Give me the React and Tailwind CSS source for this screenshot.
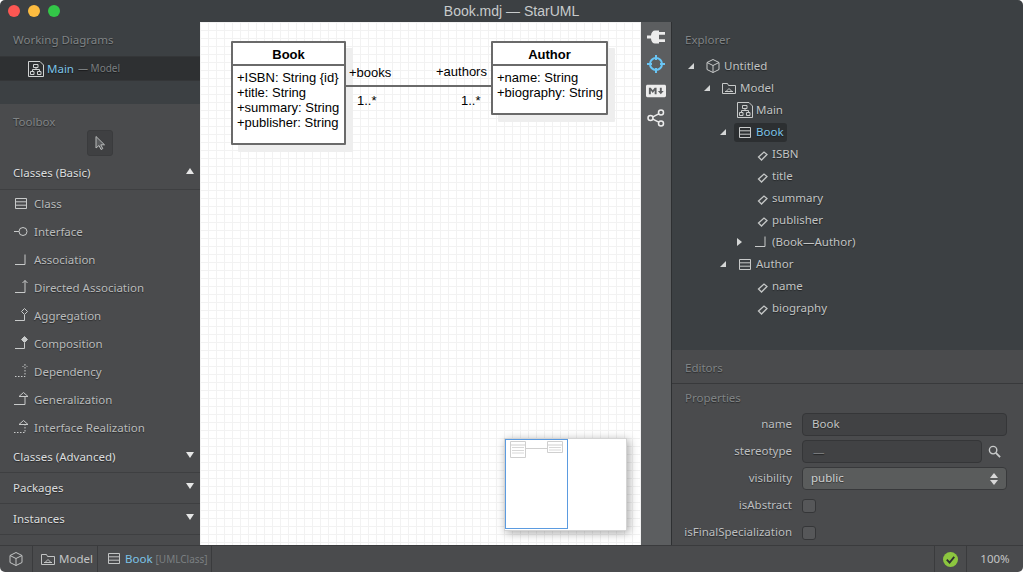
import React from 'react';
import { FaMarkdown } from 'react-icons/fa';

// small drawn icons, all in a 16x16 box
const Svg = ({ children, className = "" }) => (
  <svg viewBox="0 0 16 16" fill="none" stroke="currentColor" strokeWidth="1" className={`w-4 h-4 shrink-0 ${className}`}>
    {children}
  </svg>
);

const ClassIcon = () => (
  <Svg><path d="M2.5 2.5h11v10h-11zM2.5 5.8h11M2.5 9.2h11" /></Svg>
);
const InterfaceIcon = () => (
  <Svg><circle cx="10" cy="7.5" r="4" /><path d="M1 7.5h5" /></Svg>
);
const AssocIcon = () => (
  <Svg><path d="M2 12.5h10V2.5" /></Svg>
);
const DirectedIcon = () => (
  <Svg><path d="M2 12.5h10V.5M9.5 3L12 .5 14.5 3" /></Svg>
);
const AggregationIcon = ({ filled }) => (
  <Svg>
    <path d="M2 12.5h9.5V7" />
    <path d="M11.5.5l3 3-3 3-3-3z" fill={filled ? "currentColor" : "none"} />
  </Svg>
);
const DependencyIcon = () => (
  <Svg><path d="M2 12.5h10V.5M9.5 3L12 .5 14.5 3" strokeDasharray="1.5 1.5" /></Svg>
);
const GeneralizationIcon = () => (
  <Svg><path d="M1 12.5h11v-8M6 4.5h9L10.5.5z" /></Svg>
);
const RealizationIcon = () => (
  <Svg>
    <path d="M1 12.5h11v-8" strokeDasharray="1.5 1.5" />
    <path d="M6 4.5h9L10.5.5z" />
  </Svg>
);
const CubeIcon = () => (
  <Svg><path d="M8 1.5l6 3v7l-6 3-6-3v-7zM2 4.5l6 3 6-3M8 7.5v7" /></Svg>
);
const PackageIcon = () => (
  <Svg><path d="M1.5 3.5v10h13v-8h-7l-1-2zM5 11.5h6L8 8.5zM4 11.5h8" /></Svg>
);
const DiagramIcon = () => (
  <Svg>
    <path d="M.5.5h11.5l3.5 3.5v11.5H.5z" />
    <path d="M5.5 3.5H10v3H5.5zM2.5 10.5H6v3H2.5zM9.5 10.5H13v3H9.5zM8 6.5v2M4.5 10.5v-2h7v2" />
  </Svg>
);
const AttrIcon = () => (
  <Svg className="text-[#c4c6c6]"><path d="M5.5 11L11 6l3 2.5L8.5 14z" strokeWidth="1.3" /></Svg>
);

const Panel = ({ children }) => (
  <div className="pl-[13px] text-[#808486] leading-4">{children}</div>
);

const toolItems = [
  ['Class', <ClassIcon />],
  ['Interface', <InterfaceIcon />],
  ['Association', <AssocIcon />],
  ['Directed Association', <DirectedIcon />],
  ['Aggregation', <AggregationIcon />],
  ['Composition', <AggregationIcon filled />],
  ['Dependency', <DependencyIcon />],
  ['Generalization', <GeneralizationIcon />],
  ['Interface Realization', <RealizationIcon />],
];

const SectionHead = ({ title, open, className = "" }) => (
  <div className={`flex items-center justify-between pl-[13px] pr-[6px] border-b border-[#3e3f41] text-[#dcdedf] ${className}`}>
    <span className="pb-[1px]">{title}</span>
    <span className={`w-0 h-0 mb-[4px] border-x-[4px] border-x-transparent ${open ? 'border-b-[6px] border-b-[#e6e6e6]' : 'border-t-[6px] border-t-[#e6e6e6]'}`} />
  </div>
);

const Toolbox = () => (
  <div className="flex-1 min-h-0 overflow-hidden bg-[#4a4b4d] pt-[10px]">
    <Panel>Toolbox</Panel>
    <div className="w-[26px] h-[26px] ml-[87px] flex items-center justify-center rounded-[3px] bg-[#3f4042] border border-[#3a3b3d]">
      <svg viewBox="0 0 16 16" className="w-4 h-4" fill="#5a5c5e" stroke="#b8baba" strokeWidth="1">
        <path d="M4 1.5V13l3-2.5 2 4 1.8-.9-2-3.8h3.7z" />
      </svg>
    </div>
    <SectionHead title="Classes (Basic)" open className="h-[34px] pt-[1px]" />
    {toolItems.map(([label, icon]) => (
      <div key={label} className="h-[28px] flex items-center gap-[5px] pl-[13px] text-[#b9bbbc]">
        <span className="text-[#c8caca]">{icon}</span>
        <span className="pb-[1px]">{label}</span>
      </div>
    ))}
    <SectionHead title="Classes (Advanced)" className="h-[31px]" />
    <SectionHead title="Packages" className="h-[31px]" />
    <SectionHead title="Instances" className="h-[31px]" />
  </div>
);

const LeftBar = () => (
  <div className="w-[200px] shrink-0 flex flex-col [text-shadow:0_1px_1px_rgba(0,0,0,0.45)]">
    <div className="h-[82px] shrink-0 bg-[#3c4043]">
      <div className="h-[34px] pt-[2px] flex items-center"><Panel>Working Diagrams</Panel></div>
      <div className="h-[25px] flex items-center pl-[28px] gap-[3px] bg-[#2e3032] border-y border-[#343638]">
        <span className="text-[#d0d2d2]"><DiagramIcon /></span>
        <span className="text-[#7cc3e8]">Main</span>
        <span className="text-[#7b7f81] text-[10px] ml-[1px]">— Model</span>
      </div>
    </div>
    <Toolbox />
  </div>
);

// UML boxes on the diagram canvas
const UmlBox = ({ name, attrs, className }) => (
  <div className={`absolute bg-white border-2 border-[#6a6a6a] shadow-[7px_7px_0_#eeeeee] flex flex-col rounded-[1px] ${className}`}>
    <div className="h-[23px] pt-[2px] border-b-2 border-[#6a6a6a] flex items-center justify-center font-bold text-black">{name}</div>
    <div className="pl-[4px] pt-[4px] leading-[15px] text-black whitespace-nowrap">
      {attrs.map(a => <div key={a}>{a}</div>)}
    </div>
  </div>
);

const Minimap = () => (
  <div className="absolute left-[304px] top-[416px] w-[123px] h-[93px] bg-white border border-[#d4d4d4] shadow-[2px_2px_9px_rgba(0,0,0,0.35)]">
    <div className="w-[63px] h-[90px] border border-[#5b9be0] relative">
      <svg viewBox="0 0 62 30" className="w-[62px] h-[30px]" fill="none" stroke="#cfcfcf" strokeWidth="1">
        <path d="M4.5 1.5h15v16h-15zM4.5 5h15M41.5 1.5h15v11h-15zM41.5 5h15M20 8.5h21" />
        <path d="M6 7.5h12M6 10.5h12M6 13h12M43 7.5h12M43 10h12" stroke="#d8d8d8" />
      </svg>
    </div>
  </div>
);

const Canvas = () => (
  <div className="flex-1 min-w-0 relative overflow-hidden bg-white bg-[linear-gradient(#f2f2f2_1px,transparent_1px),linear-gradient(90deg,#f2f2f2_1px,transparent_1px)] bg-[size:8px_8px] font-['Liberation_Sans',sans-serif] text-[13px] text-black">
    <UmlBox
      name="Book"
      className="left-[31px] top-[19px] w-[115px] h-[104px]"
      attrs={['+ISBN: String {id}', '+title: String', '+summary: String', '+publisher: String']}
    />
    <UmlBox
      name="Author"
      className="left-[291px] top-[19px] w-[117px] h-[74px]"
      attrs={['+name: String', '+biography: String']}
    />
    <div className="absolute left-[146px] top-[63px] w-[146px] h-[2px] bg-[#6a6a6a]" />
    <span className="absolute left-[149px] top-[41px]">+books</span>
    <span className="absolute left-[236px] top-[40px]">+authors</span>
    <span className="absolute left-[157px] top-[69px]">1..*</span>
    <span className="absolute left-[261px] top-[69px]">1..*</span>
    <Minimap />
  </div>
);

const ToolRail = () => (
  <div className="w-[30px] shrink-0 bg-[#5c5e60] flex flex-col items-center pt-[1px] text-[#ececec]">
    <div className="h-[27px] flex items-center justify-center">
      <svg viewBox="0 0 18 14" className="w-[18px] h-[14px]" fill="currentColor">
        <path d="M0 5.5h4C4 2.5 6 .5 8 .5h4v13H8c-2 0-4-2-4-5H0zM12 2h6v2.700h-6zM12 9.300h6V12h-6z" />
      </svg>
    </div>
    <div className="h-[28px] flex items-center justify-center text-[#69c5f5]">
      <svg viewBox="0 0 18 18" className="w-[18px] h-[18px]" fill="none" stroke="currentColor" strokeWidth="2">
        <circle cx="9" cy="9" r="6" />
        <path d="M9 0v5M9 13v5M0 9h5M13 9h5" />
      </svg>
    </div>
    <div className="h-[26px] flex items-center justify-center">
      <FaMarkdown className="w-[20px] h-[20px]" />
    </div>
    <div className="h-[28px] flex items-center justify-center">
      <svg viewBox="0 0 18 18" className="w-[18px] h-[18px]" fill="none" stroke="currentColor" strokeWidth="1.5">
        <circle cx="3.5" cy="9" r="2.5" />
        <circle cx="14" cy="3.5" r="2.5" />
        <circle cx="14" cy="14.5" r="2.5" />
        <path d="M5.8 7.8l6-3M5.8 10.2l6 3" />
      </svg>
    </div>
  </div>
);

const treeRows = [
  { depth: 0, arrow: 'open', icon: <CubeIcon />, label: 'Untitled' },
  { depth: 1, arrow: 'open', icon: <PackageIcon />, label: 'Model' },
  { depth: 2, icon: <DiagramIcon />, label: 'Main' },
  { depth: 2, arrow: 'open', icon: <ClassIcon />, label: 'Book', selected: true, low: true },
  { depth: 3, icon: <AttrIcon />, label: 'ISBN' },
  { depth: 3, icon: <AttrIcon />, label: 'title' },
  { depth: 3, icon: <AttrIcon />, label: 'summary' },
  { depth: 3, icon: <AttrIcon />, label: 'publisher' },
  { depth: 3, arrow: 'closed', icon: <AssocIcon />, label: '(Book—Author)' },
  { depth: 2, arrow: 'open', icon: <ClassIcon />, label: 'Author', low: true },
  { depth: 3, icon: <AttrIcon />, label: 'name' },
  { depth: 3, icon: <AttrIcon />, label: 'biography' },
];

const indents = ['', 'ml-[16px]', 'ml-[32px]', 'ml-[48px]'];

const TreeRow = ({ row }) => (
  <div className={`h-[22px] flex items-center ${indents[row.depth]}`}>
    <span className="w-[16px] h-[16px] flex items-center justify-center">
      {row.arrow === 'open' && (
        <span className="w-0 h-0 border-l-[6px] border-l-transparent border-b-[6px] border-b-[#d4d6d6]" />
      )}
      {row.arrow === 'closed' && (
        <span className="w-0 h-0 border-y-[4px] border-y-transparent border-l-[5px] border-l-[#d4d6d6]" />
      )}
    </span>
    <div className={`ml-[3px] h-[19px] px-[3px] gap-[3px] flex items-center rounded-[3px] ${row.selected ? 'bg-[#2c2f31]' : ''}`}>
      <span className={`text-[#c8caca] ${row.low ? 'translate-y-[1px]' : ''}`}>{row.icon}</span>
      <span className={row.selected ? 'text-[#7cc3e8]' : 'text-[#c2c4c4]'}>{row.label}</span>
    </div>
  </div>
);

const Explorer = () => (
  <div className="h-[328px] shrink-0 bg-[#3c4043]">
    <div className="h-[33px] pt-[2px] flex items-center"><Panel>Explorer</Panel></div>
    <div className="pl-[11px]">
      {treeRows.map(r => <TreeRow key={r.label} row={r} />)}
    </div>
  </div>
);

const PropRow = ({ label, children }) => (
  <div className="h-[27px] flex items-center">
    <span className="w-[120px] pb-[1px] text-right text-[#bdbfc0]">{label}</span>
    <div className="flex-1 ml-[10px] mr-[16px] flex items-center">{children}</div>
  </div>
);

const Editors = () => (
  <div className="flex-1 min-h-0 overflow-hidden bg-[#4a4b4d]">
    <div className="h-[34px] pt-[2px] flex items-center border-b border-[#38393b]"><Panel>Editors</Panel></div>
    <div className="h-[27px] pt-[1px] flex items-center"><Panel>Properties</Panel></div>
    <PropRow label="name">
      <div className="w-full h-[23px] flex items-center pl-[9px] pb-[1px] rounded-[4px] bg-[#414244] border border-[#353638] text-[#c2c4c4]">Book</div>
    </PropRow>
    <PropRow label="stereotype">
      <div className="flex-1 h-[23px] flex items-center pl-[10px] rounded-[4px] bg-[#414244] border border-[#353638] text-[#77797b]">—</div>
      <svg viewBox="0 0 14 14" className="w-[13px] h-[13px] ml-[6px] mr-[6px]" fill="none" stroke="#c8caca" strokeWidth="1.5">
        <circle cx="5.5" cy="5.5" r="4" />
        <path d="M8.5 8.5l4.5 4.5" strokeWidth="2" />
      </svg>
    </PropRow>
    <PropRow label="visibility">
      <div className="w-full h-[23px] flex items-center justify-between pl-[8px] pr-[8px] rounded-[4px] bg-[#5a5c5c] border border-[#38393b] text-[#cfd1d1]">
        <span className="pb-[1px]">public</span>
        <span className="flex flex-col gap-[2px]">
          <span className="w-0 h-0 border-x-[4px] border-x-transparent border-b-[5px] border-b-[#d8d8d8]" />
          <span className="w-0 h-0 border-x-[4px] border-x-transparent border-t-[5px] border-t-[#d8d8d8]" />
        </span>
      </div>
    </PropRow>
    <PropRow label="isAbstract">
      <div className="w-[14px] h-[14px] rounded-[3px] bg-[#565759] border border-[#353638]" />
    </PropRow>
    <PropRow label="isFinalSpecialization">
      <div className="w-[14px] h-[14px] rounded-[3px] bg-[#565759] border border-[#353638]" />
    </PropRow>
  </div>
);

const StatusCell = ({ children, className = "" }) => (
  <div className={`h-full flex items-center border-r border-[#3a3b3d] ${className}`}>{children}</div>
);

const StatusBar = () => (
  <div className="h-[27px] shrink-0 flex items-center bg-[#4a4b4d] border-t border-[#3a3b3d] text-[#c2c4c4]">
    <StatusCell className="w-[33px] justify-center"><CubeIcon /></StatusCell>
    <StatusCell className="w-[65px] pl-[7px] gap-[3px]"><PackageIcon /><span>Model</span></StatusCell>
    <StatusCell className="w-[114px] pl-[8px] gap-[3px]">
      <ClassIcon />
      <span className="text-[#7cc3e8]">Book</span>
      <span className="text-[#7b7f81] text-[10px]">[UMLClass]</span>
    </StatusCell>
    <div className="flex-1" />
    <div className="w-[33px] h-full flex items-center justify-center border-x border-[#3a3b3d]">
      <svg viewBox="0 0 16 16" className="w-[15px] h-[15px]">
        <circle cx="8" cy="8" r="8" fill="#8cc63f" />
        <path d="M4 8.2l3 3 5-6" fill="none" stroke="#2e3032" strokeWidth="2" />
      </svg>
    </div>
    <div className="w-[56px] text-center">100%</div>
  </div>
);

const App = () => (
  <div className="h-screen w-full flex flex-col overflow-hidden rounded-[5px] bg-white font-['Noto_Sans',sans-serif] text-[11.5px]">
    <div className="relative h-[22px] shrink-0 bg-[#3c4043] flex items-center justify-center font-['Liberation_Sans',sans-serif] text-[14px] text-[#c8cbcc]">
      <div className="absolute left-[8px] top-[5px] flex gap-[8px]">
        <span className="w-[12px] h-[12px] rounded-full bg-[#fc5753]" />
        <span className="w-[12px] h-[12px] rounded-full bg-[#fdbc40]" />
        <span className="w-[12px] h-[12px] rounded-full bg-[#33c748]" />
      </div>
      Book.mdj — StarUML
    </div>
    <div className="flex-1 min-h-0 flex">
      <LeftBar />
      <Canvas />
      <ToolRail />
      <div className="w-[352px] shrink-0 flex flex-col border-l border-[#2e3032] [text-shadow:0_1px_1px_rgba(0,0,0,0.45)]">
        <Explorer />
        <Editors />
      </div>
    </div>
    <StatusBar />
  </div>
);

export default App;
